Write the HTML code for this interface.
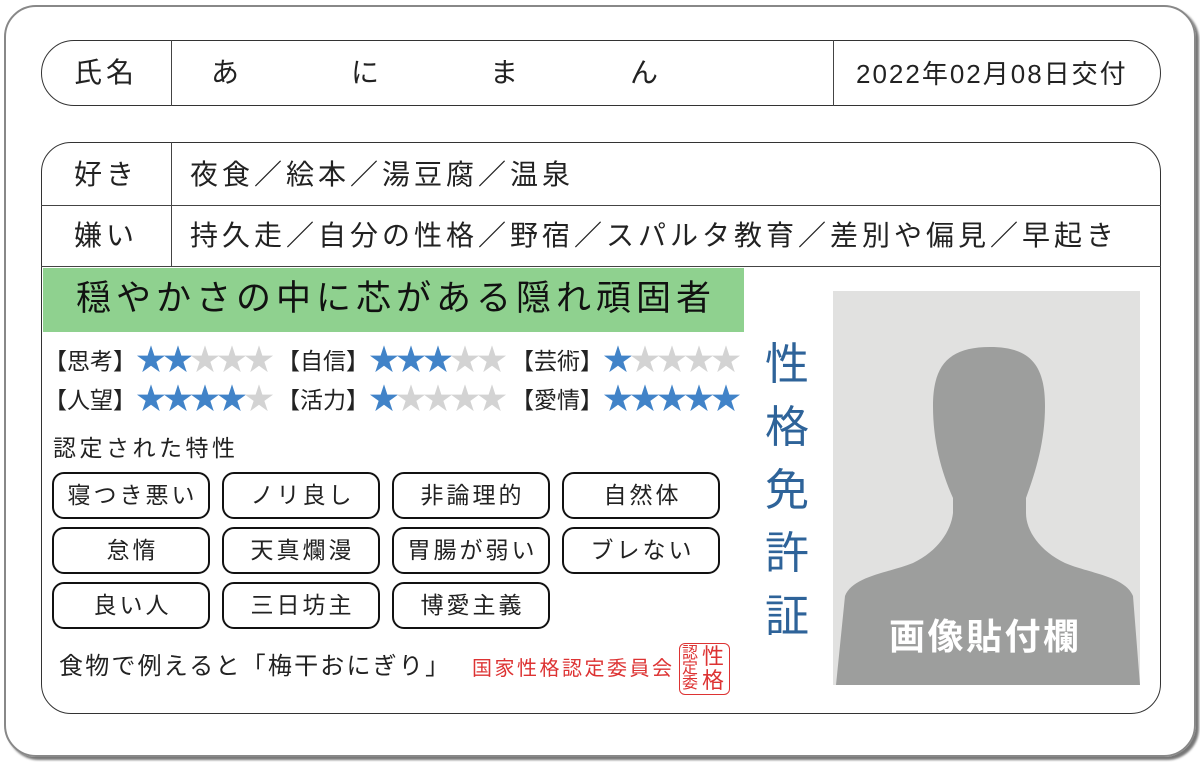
<!DOCTYPE html>
<html><head><meta charset="utf-8"><style>
*{margin:0;padding:0;box-sizing:border-box}
body{width:1200px;height:762px;background:#fff;position:relative;overflow:hidden;font-family:"Liberation Sans","Noto Sans CJK JP",sans-serif;color:#222}
.a{position:absolute;white-space:nowrap}
.card{left:4px;top:5px;width:1192px;height:752px;border:2px solid #888;border-radius:32px;box-shadow:3px 3px 2px #777}
.name{left:41px;top:40px;width:1120px;height:66px;border:1px solid #333;border-radius:33px}
.box{left:41px;top:142px;width:1120px;height:572px;border:1px solid #333;border-radius:30px}
.vl{width:1px;background:#444}
.hl{height:1px;background:#444}
.t26{font-size:28px;line-height:32px;letter-spacing:4px}
.chip{width:158px;height:47px;border:2.5px solid #111;border-radius:12px;font-size:23px;line-height:42px;text-align:center;letter-spacing:3px;text-indent:3px}
.st{font-size:23px;line-height:28px}
.st i{font-style:normal;display:inline-block;width:27px;text-align:center;font-size:30px;vertical-align:top;line-height:28px}
.b{color:#4183c8}.g{color:#d3d3d3}
.v{font-size:44px;color:#2e6399;left:765px;line-height:63px}
</style></head><body>
<div class="a card"></div>
<div class="a name"></div>
<div class="a vl" style="left:171px;top:40px;height:66px"></div>
<div class="a vl" style="left:833px;top:40px;height:66px"></div>
<div class="a t26" style="left:74px;top:57px">氏名</div>
<div class="a t26" style="left:211px;top:57px">あ</div>
<div class="a t26" style="left:351px;top:57px">に</div>
<div class="a t26" style="left:490px;top:57px">ま</div>
<div class="a t26" style="left:630px;top:57px">ん</div>
<div class="a" style="left:856px;top:59px;font-size:26px;line-height:30px;letter-spacing:2px">2022年02月08日交付</div>

<div class="a box"></div>
<div class="a vl" style="left:171px;top:142px;height:124px"></div>
<div class="a hl" style="left:41px;top:205px;width:1120px"></div>
<div class="a hl" style="left:41px;top:266px;width:1120px"></div>
<div class="a t26" style="left:74px;top:159px">好き</div>
<div class="a t26" style="left:190px;top:159px">夜食／絵本／湯豆腐／温泉</div>
<div class="a t26" style="left:74px;top:220px">嫌い</div>
<div class="a t26" style="left:190px;top:220px">持久走／自分の性格／野宿／スパルタ教育／差別や偏見／早起き</div>

<div class="a" style="left:43px;top:268px;width:701px;height:64px;background:#8fd18f"></div>
<div class="a" style="left:76px;top:279px;font-size:35px;line-height:40px;letter-spacing:5px;color:#111">穏やかさの中に芯がある隠れ頑固者</div>

<div class="a st" style="left:44px;top:347px">【思考】<i class="b">★</i><i class="b">★</i><i class="g">★</i><i class="g">★</i><i class="g">★</i></div>
<div class="a st" style="left:277px;top:347px">【自信】<i class="b">★</i><i class="b">★</i><i class="b">★</i><i class="g">★</i><i class="g">★</i></div>
<div class="a st" style="left:511px;top:347px">【芸術】<i class="b">★</i><i class="g">★</i><i class="g">★</i><i class="g">★</i><i class="g">★</i></div>
<div class="a st" style="left:44px;top:386px">【人望】<i class="b">★</i><i class="b">★</i><i class="b">★</i><i class="b">★</i><i class="g">★</i></div>
<div class="a st" style="left:277px;top:386px">【活力】<i class="b">★</i><i class="g">★</i><i class="g">★</i><i class="g">★</i><i class="g">★</i></div>
<div class="a st" style="left:511px;top:386px">【愛情】<i class="b">★</i><i class="b">★</i><i class="b">★</i><i class="b">★</i><i class="b">★</i></div>

<div class="a" style="left:53px;top:434px;font-size:23px;line-height:28px;letter-spacing:3.5px">認定された特性</div>
<div class="a chip" style="left:52px;top:472px">寝つき悪い</div>
<div class="a chip" style="left:222px;top:472px">ノリ良し</div>
<div class="a chip" style="left:392px;top:472px">非論理的</div>
<div class="a chip" style="left:562px;top:472px">自然体</div>
<div class="a chip" style="left:52px;top:527px">怠惰</div>
<div class="a chip" style="left:222px;top:527px">天真爛漫</div>
<div class="a chip" style="left:392px;top:527px">胃腸が弱い</div>
<div class="a chip" style="left:562px;top:527px">ブレない</div>
<div class="a chip" style="left:52px;top:582px">良い人</div>
<div class="a chip" style="left:222px;top:582px">三日坊主</div>
<div class="a chip" style="left:392px;top:582px">博愛主義</div>

<div class="a" style="left:59px;top:653px;font-size:24px;line-height:28px;letter-spacing:2.2px">食物で例えると「梅干おにぎり」</div>
<div class="a" style="left:472px;top:657px;font-size:20px;line-height:24px;letter-spacing:2.5px;color:#d33">国家性格認定委員会</div>
<div class="a" style="left:679px;top:643px;width:51px;height:52px;border:1.5px solid #d33;border-radius:6px;color:#d33;font-size:16px;line-height:16px">
<div class="a" style="left:2px;top:2px;width:16px;line-height:15px;white-space:normal">認定委</div>
<div class="a" style="left:22px;top:1px;font-size:22px;line-height:24px;width:24px;white-space:normal">性格</div>
</div>

<div class="a v" style="top:333px">性</div>
<div class="a v" style="top:396px">格</div>
<div class="a v" style="top:459px">免</div>
<div class="a v" style="top:522px">許</div>
<div class="a v" style="top:585px">証</div>

<div class="a" style="left:833px;top:291px;width:307px;height:394px;background:#e1e1e0;overflow:hidden">
<svg width="307" height="394" viewBox="0 0 307 394"><path fill="#9d9e9d" d="M157,56 C115,56 100,75 100,115 C100,150 108,180 120,207 L120,222 C118,240 105,260 80,272 C55,282 20,285 12,305 L3,394 L307,394 L300,305 C292,285 255,282 232,272 C207,260 193,240 193,222 L193,207 C203,180 212,150 212,115 C212,75 198,56 157,56 Z"/></svg>
<div class="a" style="left:56px;top:325px;color:#fff;font-weight:bold;font-size:36px;line-height:42px;letter-spacing:2.5px">画像貼付欄</div>
</div>
</body></html>
